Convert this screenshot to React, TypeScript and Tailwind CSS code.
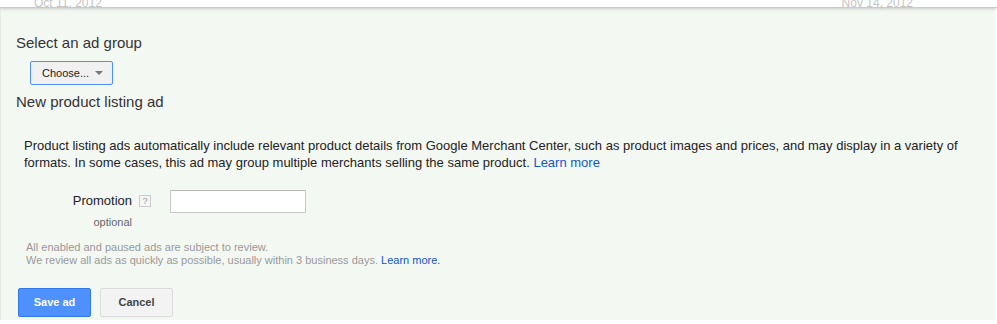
import React from "react";

const App = () => {
  return (
    <div className="w-[997px] h-[324px] overflow-hidden bg-white font-['Liberation_Sans',Arial,sans-serif] text-[#222]">
      {/* barra de datas no topo */}
      <div className="relative h-[12px] bg-white border-b border-[#c8ccc6] shadow-[0_1px_3px_rgba(0,0,0,0.18)] z-10">
        <div className="flex justify-between pl-[34px] pr-[84px] -mt-[4px] text-[12px] leading-[14px] text-[#c4c4c4]">
          <span>Oct 11, 2012</span>
          <span>Nov 14, 2012</span>
        </div>
      </div>

      <div className="w-[995px] h-[312px] bg-[#f4f8f3] border-l border-[#e6ebe4] pl-[15px] pt-[26px]">
        <div className="text-[15px] leading-[18px] text-[#333]">Select an ad group</div>

        <div className="pl-[14px] mt-[9px]">
          <button className="flex items-center gap-[6px] h-[24px] w-[83px] pl-[11px] border border-[#4d90fe] rounded-[2px] bg-[#f1f1f1] text-[11px] text-[#222]">
            <span>Choose...</span>
            <span className="w-0 h-0 border-l-[4px] border-r-[4px] border-t-[4px] border-l-transparent border-r-transparent border-t-[#777]" />
          </button>
        </div>

        <div className="mt-[8px] text-[15px] leading-[18px] text-[#333]">New product listing ad</div>

        <p className="mt-[26px] ml-[8px] w-[960px] text-[13px] leading-[17px] text-[#222]">
          Product listing ads automatically include relevant product details from Google Merchant Center, such as product images and prices, and may display in a variety of formats. In some cases, this ad may group multiple merchants selling the same product.{" "}
          <a className="text-[#15c]">Learn more</a>
        </p>

        <div className="flex mt-[19px]">
          <div className="w-[135px] flex flex-col items-end">
            <div className="flex items-center gap-[7px] h-[22px]">
              <span className="text-[13px] text-[#222]">Promotion</span>
              <span className="flex items-center justify-center w-[12px] h-[12px] border border-[#ccc] bg-[#f6f6f6] text-[9px] leading-none text-[#999]">?</span>
            </div>
            <span className="mr-[19px] mt-[2px] text-[11px] text-[#666]">optional</span>
          </div>
          <input className="ml-[19px] w-[136px] h-[23px] bg-white border border-[#c8c8c8] border-t-[#b8b8b8] rounded-[1px] outline-none" />
        </div>

        <div className="mt-[10px] ml-[10px] text-[11px] leading-[13px] text-[#999]">
          <div>All enabled and paused ads are subject to review.</div>
          <div>
            We review all ads as quickly as possible, usually within 3 business days.{" "}
            <a className="text-[#15c]">Learn more.</a>
          </div>
        </div>

        <div className="flex gap-[9px] mt-[21px] ml-[2px]">
          <button className="w-[73px] h-[29px] rounded-[2px] border border-[#3079ed] bg-[#4d90fe] text-[11px] font-bold text-white">
            Save ad
          </button>
          <button className="w-[73px] h-[29px] rounded-[2px] border border-[#dcdcdc] bg-[#f3f3f3] text-[11px] font-bold text-[#444]">
            Cancel
          </button>
        </div>
      </div>
    </div>
  );
};

export default App;
